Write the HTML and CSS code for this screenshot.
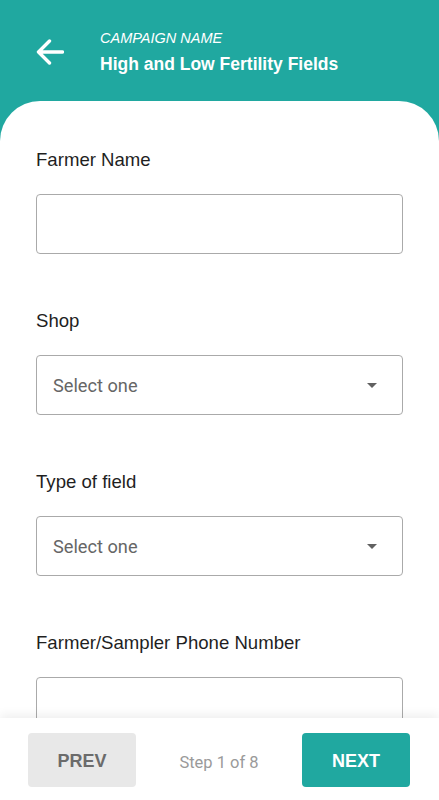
FILE: index.html
```html
<!DOCTYPE html>
<html>
<head>
<meta charset="utf-8">
<link rel="stylesheet" href="styles.css">
</head>
<body>
<div class="app">
  <header class="header">
    <svg class="back" width="28" height="28" viewBox="0 0 28 28">
      <path d="M2.5 14 H26.5 M13.5 3 L2.5 14 L13.5 25" fill="none" stroke="#fff" stroke-width="3.4" stroke-linecap="round" stroke-linejoin="round"/>
    </svg>
    <div class="titles">
      <div class="kicker">CAMPAIGN NAME</div>
      <div class="title">High and Low Fertility Fields</div>
    </div>
  </header>
  <main class="card">
    <div class="field">
      <label class="label">Farmer Name</label>
      <div class="box"></div>
    </div>
    <div class="field">
      <label class="label">Shop</label>
      <div class="box select"><span class="placeholder">Select one</span><span class="caret"></span></div>
    </div>
    <div class="field">
      <label class="label">Type of field</label>
      <div class="box select"><span class="placeholder">Select one</span><span class="caret"></span></div>
    </div>
    <div class="field">
      <label class="label">Farmer/Sampler Phone Number</label>
      <div class="box"></div>
    </div>
  </main>
  <footer class="footer">
    <button class="btn prev">PREV</button>
    <span class="step">Step 1 of 8</span>
    <button class="btn next">NEXT</button>
  </footer>
</div>
</body>
</html>
```
FILE: styles.css
```css
* { box-sizing: border-box; }
html, body { margin: 0; padding: 0; }
body {
  width: 439px;
  height: 800px;
  overflow: hidden;
  background: #20a8a0;
  font-family: "Liberation Sans", Arial, sans-serif;
}
.app {
  height: 800px;
  display: flex;
  flex-direction: column;
}
.header {
  height: 101px;
  flex: none;
  display: flex;
  align-items: flex-start;
  padding: 30px 36px 0 36px;
  color: #fff;
}
.back {
  margin-top: 8px;
  flex: none;
}
.titles {
  margin-left: 36px;
}
.kicker {
  font-style: italic;
  font-size: 14.5px;
  line-height: 17px;
}
.title {
  margin-top: 7px;
  font-weight: bold;
  font-size: 17.5px;
  line-height: 21px;
}
.card {
  flex: 1;
  min-height: 0;
  overflow: hidden;
  background: #fff;
  border-radius: 40px 40px 0 0;
  padding: 48px 36px 0 36px;
}
.field {
  margin-bottom: 56px;
}
.label {
  display: block;
  font-size: 18.6px;
  line-height: 22px;
  color: #1f1f1f;
  margin-bottom: 23px;
}
.box {
  height: 60px;
  border: 1px solid #aaaaaa;
  border-radius: 4px;
  background: #fff;
}
.select {
  display: flex;
  align-items: center;
  justify-content: space-between;
  padding: 0 25px 0 16px;
}
.placeholder {
  font-family: Roboto, "Liberation Sans", sans-serif;
  font-size: 18.2px;
  color: #666;
}
.caret {
  width: 0;
  height: 0;
  border-left: 5px solid transparent;
  border-right: 5px solid transparent;
  border-top: 5px solid #616161;
}
.footer {
  height: 82px;
  flex: none;
  background: #fff;
  box-shadow: 0 -3px 10px rgba(0, 0, 0, 0.07);
  display: flex;
  align-items: flex-start;
  justify-content: space-between;
  padding: 15px 29px 0 28px;
  position: relative;
}
.btn {
  width: 108px;
  height: 54px;
  border: none;
  border-radius: 4px;
  font-family: "Liberation Sans", Arial, sans-serif;
  font-weight: bold;
  font-size: 18px;
  padding: 3px 0 0 0;
}
.prev {
  background: #e8e8e8;
  color: #6b6b6b;
}
.next {
  background: #20a8a0;
  color: #fff;
}
.step {
  font-family: Roboto, "Liberation Sans", sans-serif;
  font-size: 16.5px;
  color: #9a9a9a;
  line-height: 54px;
  padding-top: 3px;
}
```
